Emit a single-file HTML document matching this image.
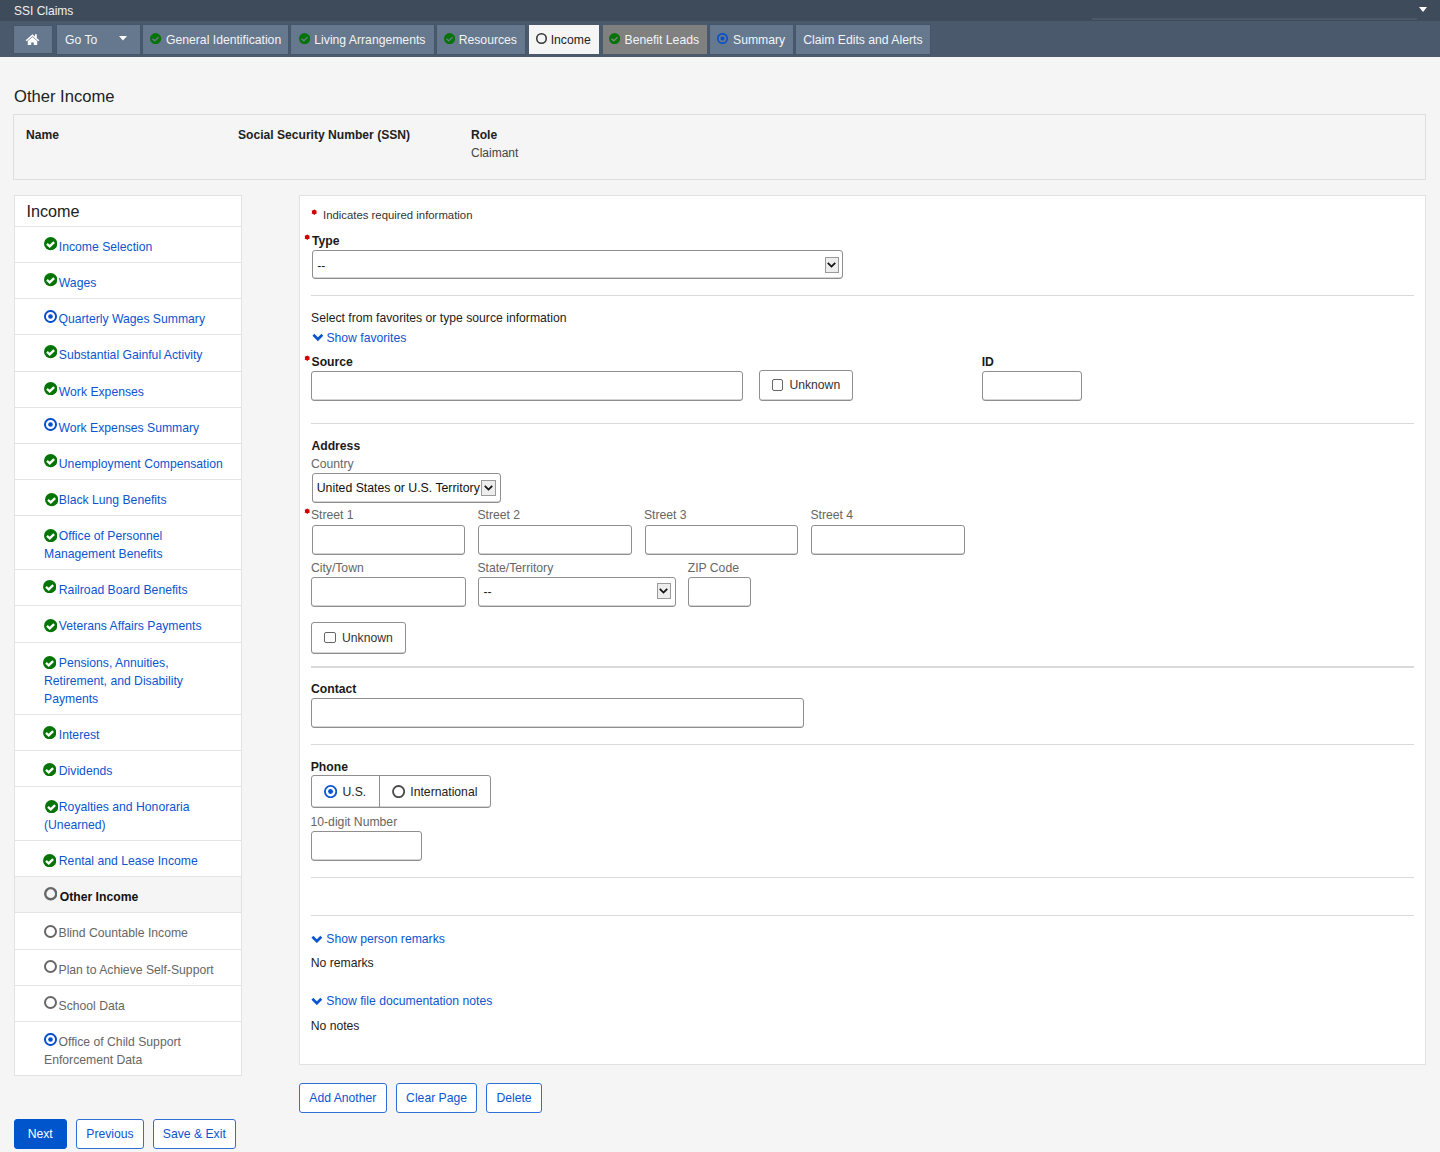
<!DOCTYPE html>
<html>
<head>
<meta charset="utf-8">
<style>
*{box-sizing:border-box;margin:0;padding:0}
html,body{width:1440px;height:1152px;overflow:hidden}
body{background:#f5f5f5;font-family:"Liberation Sans",sans-serif;font-size:12px;color:#222;position:relative}
.abs{position:absolute}
/* header */
#topbar{left:0;top:0;width:1440px;height:21px;background:#3d4b5a}
#topbar .t{left:14px;top:3.8px;color:#eef0f2;font-size:12px;line-height:15px;white-space:nowrap;transform:scaleY(1.08);transform-origin:0 11.66px}
#topbar .ln{left:1092px;top:18px;width:325px;height:2px;background:#4a5868}
#topbar .car{left:1419.4px;top:6.8px;width:0;height:0;border-left:4px solid transparent;border-right:4px solid transparent;border-top:5px solid #fff}
#nav{left:0;top:21px;width:1440px;height:36px;background:#4a5a6c}
.tab{position:absolute;top:4px;height:29px;background:#66788d;color:#f2f4f6;font-size:12.2px;line-height:29px;white-space:nowrap;box-shadow:0 0 0 1px #46566a}
.tab svg.tic{position:absolute;top:8.1px}
.tab svg{position:absolute}
.tab span{position:absolute;top:0.55px;transform:scaleY(1.08);transform-origin:0 18.7px}
/* title */
#title{left:14px;top:87.3px;font-size:16.6px;line-height:20px;color:#222;white-space:nowrap}
#info{left:13px;top:114px;width:1413px;height:65.5px;border:1px solid #dedede;background:#f5f5f5}
#info .h{position:absolute;top:13px;font-weight:bold;font-size:12.1px;line-height:15px;white-space:nowrap}
#info .v{position:absolute;top:31px;font-size:12px;line-height:15px;color:#444}
/* sidebar */
#side{left:13.5px;top:195px;width:228px;border:1px solid #e2e2e2;background:#fff}
#side .hd{height:31.0px;border-bottom:1px solid #e4e4e4;font-size:16.2px;line-height:20px;padding:5px 0 0 12px;color:#222}
.it{position:relative;padding:11px 10px 6.15px 29.5px;line-height:18px;font-size:12.2px;border-bottom:1px solid #e4e4e4}
.it:last-child{border-bottom:none}
.it .si{vertical-align:-1px;position:relative}
.lnk{color:#0b55cf}
.act{background:#f5f5f5;color:#111;font-weight:bold}
.dis{color:#666}
/* buttons */
.btn{position:absolute;height:30px;border:1px solid #2f6fd6;border-radius:3px;background:#fff;color:#0b55cf;font-size:12.2px;line-height:28px;text-align:center;white-space:nowrap}
.btn.pri{background:#0055cc;border-color:#0055cc;color:#fff}
/* main panel */
#main{left:299px;top:195px;width:1127px;height:869.5px;border:1px solid #e2e2e2;background:#fff}
.m{position:absolute;white-space:nowrap}
.lbl{font-weight:bold;font-size:12px;line-height:15px;color:#1a1a1a}
.glbl{font-size:12px;line-height:15px;color:#666}
.req{position:absolute;color:#d0021b;font-size:11px;font-weight:bold;line-height:11px}
.inp{position:absolute;height:30px;border:1px solid #8f8f8f;border-radius:3px;background:#fff;box-shadow:inset 0 -0.5px 0 #aaa}
.sel .dd{position:absolute;width:14.5px;height:16px;background:#ececec;border:1px solid #a0a0a0;top:6px}
.sel .dd svg{position:absolute;left:1.5px;top:3.5px}
.sel .tx{position:absolute;left:6px;top:0;line-height:28px;font-size:12px;color:#222}
.sep{position:absolute;left:11px;width:1103px;height:1.7px;background:#dadada}
.chev{position:absolute}
.lk{color:#0b55cf;font-size:12px;line-height:15px}
.unk{position:absolute;height:31px;border:1px solid #8f8f8f;border-radius:3px;background:#fff;font-size:12px;color:#333;line-height:29px;white-space:nowrap}
.cb{position:absolute;width:11.5px;height:11.5px;border:1.3px solid #666;border-radius:2px;top:9px}
</style>
</head>
<body>
<div id="topbar" class="abs">
  <div class="abs t">SSI Claims</div>
  <div class="abs ln"></div>
  <div class="abs car"></div>
</div>
<div id="nav" class="abs">
  <div class="tab" style="left:14px;top:5px;width:38.3px;height:27px">
    <svg style="left:11.3px;top:6.5px" width="15" height="12.5" viewBox="0 0 14 12" preserveAspectRatio="none"><path d="M7 1.2 L0.6 7 L1.6 8 L7 3.2 L12.4 8 L13.4 7 L11 4.8 L11 1.2 L9.3 1.2 L9.3 3.3 Z" fill="#fff"/><path d="M2.6 7.6 L7 3.8 L11.4 7.6 L11.4 12 L8.2 12 L8.2 9 L5.8 9 L5.8 12 L2.6 12 Z" fill="#fff"/></svg>
  </div>
  <div class="tab" style="left:57px;width:83px"><span style="left:8px">Go To</span>
    <svg style="left:62px;top:11px" width="8" height="5" viewBox="0 0 8 5"><path d="M0 0 L8 0 L4 4.6 Z" fill="#fff"/></svg>
  </div>
  <div class="tab" style="left:143px;width:145.3px"><svg style="left:7.4px" class="tic" width="11.2" height="11.2" viewBox="0 0 13 13"><circle cx="6.5" cy="6.5" r="6.5" fill="#047504"/><path d="M2.9 6.8 L5.6 9.1 L9.9 5.0" fill="none" stroke="#66788d" stroke-width="1.6"/></svg><span style="left:23px">General Identification</span></div>
  <div class="tab" style="left:291.3px;width:142.6px"><svg style="left:7.4px" class="tic" width="11.2" height="11.2" viewBox="0 0 13 13"><circle cx="6.5" cy="6.5" r="6.5" fill="#047504"/><path d="M2.9 6.8 L5.6 9.1 L9.9 5.0" fill="none" stroke="#66788d" stroke-width="1.6"/></svg><span style="left:23px">Living Arrangements</span></div>
  <div class="tab" style="left:436.7px;width:88.6px"><svg style="left:7.5px" class="tic" width="11.2" height="11.2" viewBox="0 0 13 13"><circle cx="6.5" cy="6.5" r="6.5" fill="#047504"/><path d="M2.9 6.8 L5.6 9.1 L9.9 5.0" fill="none" stroke="#66788d" stroke-width="1.6"/></svg><span style="left:22px">Resources</span></div>
  <div class="tab" style="left:528.7px;width:70px;background:#f5f5f5;color:#222;box-shadow:none"><svg style="left:7px" class="tic" width="11" height="11" viewBox="0 0 13 13"><circle cx="6.5" cy="6.5" r="5.60" fill="none" stroke="#333" stroke-width="1.8"/></svg><span style="left:22px">Income</span></div>
  <div class="tab" style="left:602.5px;width:104.2px;background:#808080;box-shadow:none"><svg style="left:6.7px" class="tic" width="11.2" height="11.2" viewBox="0 0 13 13"><circle cx="6.5" cy="6.5" r="6.5" fill="#047504"/><path d="M2.9 6.8 L5.6 9.1 L9.9 5.0" fill="none" stroke="#808080" stroke-width="1.6"/></svg><span style="left:22px">Benefit Leads</span></div>
  <div class="tab" style="left:710px;width:82.5px"><svg style="left:7px" class="tic" width="11" height="11" viewBox="0 0 13 13"><circle cx="6.5" cy="6.5" r="5.55" fill="none" stroke="#0650cc" stroke-width="1.95"/><circle cx="6.5" cy="6.5" r="2.3" fill="#0650cc"/></svg><span style="left:23px">Summary</span></div>
  <div class="tab" style="left:795.8px;width:134.2px"><span style="left:7.5px">Claim Edits and Alerts</span></div>
</div>

<div id="title" class="abs">Other Income</div>
<div id="info" class="abs">
  <div class="h" style="left:12px">Name</div>
  <div class="h" style="left:224px">Social Security Number (SSN)</div>
  <div class="h" style="left:457px">Role</div>
  <div class="v" style="left:457px">Claimant</div>
</div>

<div id="side" class="abs">
  <div class="hd">Income</div>
<div class="it lnk"><svg style="top:-1.5px;left:0.0px;margin-right:1.5px" class="si" width="13.3" height="13.3" viewBox="0 0 13 13"><circle cx="6.5" cy="6.5" r="6.5" fill="#047504"/><path d="M2.9 6.8 L5.6 9.1 L9.9 5.0" fill="none" stroke="#fff" stroke-width="2.3"/></svg>Income Selection</div>
<div class="it lnk"><svg style="top:-1.5px;left:0.0px;margin-right:1.5px" class="si" width="13.3" height="13.3" viewBox="0 0 13 13"><circle cx="6.5" cy="6.5" r="6.5" fill="#047504"/><path d="M2.9 6.8 L5.6 9.1 L9.9 5.0" fill="none" stroke="#fff" stroke-width="2.3"/></svg>Wages</div>
<div class="it lnk"><svg style="top:-1.3px;left:0.0px;margin-right:1.5px" class="si" width="13" height="13" viewBox="0 0 13 13"><circle cx="6.5" cy="6.5" r="5.55" fill="none" stroke="#0650cc" stroke-width="1.95"/><circle cx="6.5" cy="6.5" r="2.3" fill="#0650cc"/></svg>Quarterly Wages Summary</div>
<div class="it lnk"><svg style="top:-1.8px;left:0.0px;margin-right:1.5px" class="si" width="13.3" height="13.3" viewBox="0 0 13 13"><circle cx="6.5" cy="6.5" r="6.5" fill="#047504"/><path d="M2.9 6.8 L5.6 9.1 L9.9 5.0" fill="none" stroke="#fff" stroke-width="2.3"/></svg>Substantial Gainful Activity</div>
<div class="it lnk"><svg style="top:-1.3px;left:0.0px;margin-right:1.5px" class="si" width="13.3" height="13.3" viewBox="0 0 13 13"><circle cx="6.5" cy="6.5" r="6.5" fill="#047504"/><path d="M2.9 6.8 L5.6 9.1 L9.9 5.0" fill="none" stroke="#fff" stroke-width="2.3"/></svg>Work Expenses</div>
<div class="it lnk"><svg style="top:-1.8px;left:0.0px;margin-right:1.5px" class="si" width="13" height="13" viewBox="0 0 13 13"><circle cx="6.5" cy="6.5" r="5.55" fill="none" stroke="#0650cc" stroke-width="1.95"/><circle cx="6.5" cy="6.5" r="2.3" fill="#0650cc"/></svg>Work Expenses Summary</div>
<div class="it lnk"><svg style="top:-1.3px;left:0.0px;margin-right:1.5px" class="si" width="13.3" height="13.3" viewBox="0 0 13 13"><circle cx="6.5" cy="6.5" r="6.5" fill="#047504"/><path d="M2.9 6.8 L5.6 9.1 L9.9 5.0" fill="none" stroke="#fff" stroke-width="2.3"/></svg>Unemployment Compensation</div>
<div class="it lnk"><svg style="top:1.8px;left:1.0px;margin-right:1.5px" class="si" width="13.3" height="13.3" viewBox="0 0 13 13"><circle cx="6.5" cy="6.5" r="6.5" fill="#047504"/><path d="M2.9 6.8 L5.6 9.1 L9.9 5.0" fill="none" stroke="#fff" stroke-width="2.3"/></svg>Black Lung Benefits</div>
<div class="it lnk"><svg style="top:1.3px;left:-0.3px;margin-right:1.5px" class="si" width="13.3" height="13.3" viewBox="0 0 13 13"><circle cx="6.5" cy="6.5" r="6.5" fill="#047504"/><path d="M2.9 6.8 L5.6 9.1 L9.9 5.0" fill="none" stroke="#fff" stroke-width="2.3"/></svg>Office of Personnel Management Benefits</div>
<div class="it lnk"><svg style="top:-1.8px;left:-0.9px;margin-right:1.5px" class="si" width="13.3" height="13.3" viewBox="0 0 13 13"><circle cx="6.5" cy="6.5" r="6.5" fill="#047504"/><path d="M2.9 6.8 L5.6 9.1 L9.9 5.0" fill="none" stroke="#fff" stroke-width="2.3"/></svg>Railroad Board Benefits</div>
<div class="it lnk"><svg style="top:1.3px;left:0.0px;margin-right:1.5px" class="si" width="13.3" height="13.3" viewBox="0 0 13 13"><circle cx="6.5" cy="6.5" r="6.5" fill="#047504"/><path d="M2.9 6.8 L5.6 9.1 L9.9 5.0" fill="none" stroke="#fff" stroke-width="2.3"/></svg>Veterans Affairs Payments</div>
<div class="it lnk"><svg style="top:1.3px;left:-0.9px;margin-right:1.5px" class="si" width="13.3" height="13.3" viewBox="0 0 13 13"><circle cx="6.5" cy="6.5" r="6.5" fill="#047504"/><path d="M2.9 6.8 L5.6 9.1 L9.9 5.0" fill="none" stroke="#fff" stroke-width="2.3"/></svg>Pensions, Annuities, Retirement, and Disability Payments</div>
<div class="it lnk"><svg style="top:-0.8px;left:-0.9px;margin-right:1.5px" class="si" width="13.3" height="13.3" viewBox="0 0 13 13"><circle cx="6.5" cy="6.5" r="6.5" fill="#047504"/><path d="M2.9 6.8 L5.6 9.1 L9.9 5.0" fill="none" stroke="#fff" stroke-width="2.3"/></svg>Interest</div>
<div class="it lnk"><svg style="top:0.6px;left:-0.9px;margin-right:1.5px" class="si" width="13.3" height="13.3" viewBox="0 0 13 13"><circle cx="6.5" cy="6.5" r="6.5" fill="#047504"/><path d="M2.9 6.8 L5.6 9.1 L9.9 5.0" fill="none" stroke="#fff" stroke-width="2.3"/></svg>Dividends</div>
<div class="it lnk"><svg style="top:1.4px;left:1.0px;margin-right:1.5px" class="si" width="13.3" height="13.3" viewBox="0 0 13 13"><circle cx="6.5" cy="6.5" r="6.5" fill="#047504"/><path d="M2.9 6.8 L5.6 9.1 L9.9 5.0" fill="none" stroke="#fff" stroke-width="2.3"/></svg>Royalties and Honoraria (Unearned)</div>
<div class="it lnk"><svg style="top:1.0px;left:-0.9px;margin-right:1.5px" class="si" width="13.3" height="13.3" viewBox="0 0 13 13"><circle cx="6.5" cy="6.5" r="6.5" fill="#047504"/><path d="M2.9 6.8 L5.6 9.1 L9.9 5.0" fill="none" stroke="#fff" stroke-width="2.3"/></svg>Rental and Lease Income</div>
<div class="it act"><svg style="top:-1.5px;left:0.0px;margin-right:2.3px" class="si" width="13.4" height="13.4" viewBox="0 0 13 13"><circle cx="6.5" cy="6.5" r="5.35" fill="none" stroke="#666" stroke-width="2.3"/></svg>Other Income</div>
<div class="it dis"><svg style="top:-0.9px;left:0.0px;margin-right:1.5px" class="si" width="13" height="13" viewBox="0 0 13 13"><circle cx="6.5" cy="6.5" r="5.50" fill="none" stroke="#666" stroke-width="2.0"/></svg>Blind Countable Income</div>
<div class="it dis"><svg style="top:-1.8px;left:0.0px;margin-right:1.5px" class="si" width="13" height="13" viewBox="0 0 13 13"><circle cx="6.5" cy="6.5" r="5.50" fill="none" stroke="#666" stroke-width="2.0"/></svg>Plan to Achieve Self-Support</div>
<div class="it dis"><svg style="top:-1.5px;left:0.0px;margin-right:1.5px" class="si" width="13" height="13" viewBox="0 0 13 13"><circle cx="6.5" cy="6.5" r="5.50" fill="none" stroke="#666" stroke-width="2.0"/></svg>School Data</div>
<div class="it dis"><svg style="top:-1.3px;left:0.0px;margin-right:1.5px" class="si" width="13" height="13" viewBox="0 0 13 13"><circle cx="6.5" cy="6.5" r="5.55" fill="none" stroke="#0650cc" stroke-width="1.95"/><circle cx="6.5" cy="6.5" r="2.3" fill="#0650cc"/></svg>Office of Child Support Enforcement Data</div>
</div>

<div class="btn pri" style="left:13.5px;top:1119px;width:53.4px">Next</div>
<div class="btn" style="left:76px;top:1119px;width:68px">Previous</div>
<div class="btn" style="left:153px;top:1119px;width:82.6px">Save &amp; Exit</div>

<div id="main" class="abs">
<svg class="m" style="left:10.90px;top:12.60px" width="6.4" height="6.4" viewBox="-3.2 -3.2 6.4 6.4"><path d="M0.00 -3.05 L0.95 -1.65 L2.64 -1.52 L1.90 0.00 L2.64 1.52 L0.95 1.65 L0.00 3.05 L-0.95 1.65 L-2.64 1.53 L-1.90 0.00 L-2.64 -1.53 L-0.95 -1.65 Z" fill="#d00000"/><circle r="2.15" fill="#d00000"/></svg>
<div class="m" style="left:23.00px;top:12.47px;font-size:11.35px;line-height:15px;color:#333;">Indicates required information</div>
<svg class="m" style="left:3.60px;top:37.70px" width="6.4" height="6.4" viewBox="-3.2 -3.2 6.4 6.4"><path d="M0.00 -3.05 L0.95 -1.65 L2.64 -1.52 L1.90 0.00 L2.64 1.52 L0.95 1.65 L0.00 3.05 L-0.95 1.65 L-2.64 1.53 L-1.90 0.00 L-2.64 -1.53 L-0.95 -1.65 Z" fill="#d00000"/><circle r="2.15" fill="#d00000"/></svg>
<div class="m" style="left:11.90px;top:37.87px;font-size:12.2px;line-height:15px;color:#1a1a1a;font-weight:bold;">Type</div>
<div class="inp" style="left:11.50px;top:53.80px;width:531.70px;height:29.60px;"></div>
<div class="m" style="left:17.30px;top:62.87px;font-size:12.2px;line-height:15px;color:#222;">--</div>
<div class="m" style="left:524.70px;top:60.50px;width:14.20px;height:16.00px;background:#ededed;border:1px solid #9a9a9a"><svg style="position:absolute;left:1.60px;top:4.00px" width="9" height="6" viewBox="0 0 9 6"><path d="M0.8 0.8 L4.5 4.6 L8.2 0.8" fill="none" stroke="#111" stroke-width="1.7"/></svg></div>
<div class="sep" style="top:98.75px"></div>
<div class="m" style="left:11.10px;top:115.27px;font-size:12.2px;line-height:15px;color:#222;">Select from favorites or type source information</div>
<svg class="m" style="left:11.50px;top:137.40px" width="11.80" height="8.30" viewBox="0 0 11 7"><path d="M1.3 1.3 L5.5 5.5 L9.7 1.3" fill="none" stroke="#0b55cf" stroke-width="2.5"/></svg>
<div class="m" style="left:26.40px;top:134.57px;font-size:12.2px;line-height:15px;color:#0b55cf;">Show favorites</div>
<svg class="m" style="left:3.55px;top:158.60px" width="6.4" height="6.4" viewBox="-3.2 -3.2 6.4 6.4"><path d="M0.00 -3.05 L0.95 -1.65 L2.64 -1.52 L1.90 0.00 L2.64 1.52 L0.95 1.65 L0.00 3.05 L-0.95 1.65 L-2.64 1.53 L-1.90 0.00 L-2.64 -1.53 L-0.95 -1.65 Z" fill="#d00000"/><circle r="2.15" fill="#d00000"/></svg>
<div class="m" style="left:11.50px;top:158.87px;font-size:12.2px;line-height:15px;color:#1a1a1a;font-weight:bold;">Source</div>
<div class="inp" style="left:11.40px;top:175.40px;width:431.20px;height:29.70px;"></div>
<div class="inp" style="left:458.50px;top:173.70px;width:94.90px;height:31.50px;"></div>
<div class="m" style="left:471.60px;top:183.20px;width:11.70px;height:11.60px;border:1.2px solid #666;border-radius:2px;background:#fff"></div>
<div class="m" style="left:489.40px;top:182.47px;font-size:12.2px;line-height:15px;color:#333;">Unknown</div>
<div class="m" style="left:681.70px;top:159.07px;font-size:12.2px;line-height:15px;color:#1a1a1a;font-weight:bold;">ID</div>
<div class="inp" style="left:682.40px;top:175.40px;width:100.00px;height:30.00px;"></div>
<div class="sep" style="top:226.65px"></div>
<div class="m" style="left:11.40px;top:242.67px;font-size:12.2px;line-height:15px;color:#1a1a1a;font-weight:bold;">Address</div>
<div class="m" style="left:10.90px;top:260.67px;font-size:12.2px;line-height:15px;color:#666;">Country</div>
<div class="inp" style="left:11.50px;top:277.00px;width:189.00px;height:30.20px;"></div>
<div class="m" style="left:16.70px;top:285.14px;font-size:12.3px;line-height:15px;color:#111;">United States or U.S. Territory</div>
<div class="m" style="left:181.40px;top:284.10px;width:14.50px;height:16.40px;background:#ededed;border:1px solid #9a9a9a"><svg style="position:absolute;left:1.75px;top:4.20px" width="9" height="6" viewBox="0 0 9 6"><path d="M0.8 0.8 L4.5 4.6 L8.2 0.8" fill="none" stroke="#111" stroke-width="1.7"/></svg></div>
<svg class="m" style="left:3.55px;top:312.05px" width="6.4" height="6.4" viewBox="-3.2 -3.2 6.4 6.4"><path d="M0.00 -3.05 L0.95 -1.65 L2.64 -1.52 L1.90 0.00 L2.64 1.52 L0.95 1.65 L0.00 3.05 L-0.95 1.65 L-2.64 1.53 L-1.90 0.00 L-2.64 -1.53 L-0.95 -1.65 Z" fill="#d00000"/><circle r="2.15" fill="#d00000"/></svg>
<div class="m" style="left:10.90px;top:312.37px;font-size:12.2px;line-height:15px;color:#666;">Street 1</div>
<div class="inp" style="left:11.50px;top:329.00px;width:153.90px;height:29.50px;"></div>
<div class="m" style="left:177.40px;top:312.37px;font-size:12.2px;line-height:15px;color:#666;">Street 2</div>
<div class="inp" style="left:178.00px;top:329.00px;width:153.80px;height:29.50px;"></div>
<div class="m" style="left:343.90px;top:312.37px;font-size:12.2px;line-height:15px;color:#666;">Street 3</div>
<div class="inp" style="left:344.50px;top:329.00px;width:153.80px;height:29.50px;"></div>
<div class="m" style="left:510.40px;top:312.37px;font-size:12.2px;line-height:15px;color:#666;">Street 4</div>
<div class="inp" style="left:511.00px;top:329.00px;width:153.70px;height:29.50px;"></div>
<div class="m" style="left:10.90px;top:364.52px;font-size:12.2px;line-height:15px;color:#666;">City/Town</div>
<div class="inp" style="left:11.25px;top:380.50px;width:154.35px;height:30.00px;"></div>
<div class="m" style="left:177.40px;top:364.52px;font-size:12.2px;line-height:15px;color:#666;">State/Territory</div>
<div class="inp" style="left:178.00px;top:380.50px;width:197.50px;height:30.00px;"></div>
<div class="m" style="left:183.50px;top:389.37px;font-size:12.2px;line-height:15px;color:#222;">--</div>
<div class="m" style="left:356.80px;top:387.20px;width:14.20px;height:16.10px;background:#ededed;border:1px solid #9a9a9a"><svg style="position:absolute;left:1.60px;top:4.05px" width="9" height="6" viewBox="0 0 9 6"><path d="M0.8 0.8 L4.5 4.6 L8.2 0.8" fill="none" stroke="#111" stroke-width="1.7"/></svg></div>
<div class="m" style="left:387.70px;top:364.52px;font-size:12.2px;line-height:15px;color:#666;">ZIP Code</div>
<div class="inp" style="left:387.80px;top:380.50px;width:62.80px;height:30.00px;"></div>
<div class="inp" style="left:11.25px;top:426.25px;width:94.75px;height:31.25px;"></div>
<div class="m" style="left:24.10px;top:435.90px;width:12.15px;height:11.60px;border:1.2px solid #666;border-radius:2px;background:#fff"></div>
<div class="m" style="left:42.00px;top:434.77px;font-size:12.2px;line-height:15px;color:#333;">Unknown</div>
<div class="sep" style="top:470.05px"></div>
<div class="m" style="left:11.00px;top:486.07px;font-size:12.2px;line-height:15px;color:#1a1a1a;font-weight:bold;">Contact</div>
<div class="inp" style="left:11.30px;top:502.30px;width:492.30px;height:29.90px;"></div>
<div class="sep" style="top:547.55px"></div>
<div class="m" style="left:10.70px;top:563.57px;font-size:12.2px;line-height:15px;color:#1a1a1a;font-weight:bold;">Phone</div>
<div class="inp" style="left:11.30px;top:579.40px;width:179.70px;height:32.40px;"></div>
<div class="m" style="left:79.00px;top:579.40px;width:1px;height:32.40px;background:#8f8f8f"></div>
<svg class="m" style="left:24.20px;top:589.20px" width="13.2" height="13.2" viewBox="0 0 13.2 13.2"><circle cx="6.6" cy="6.6" r="5.7" fill="none" stroke="#0b55cf" stroke-width="1.8"/><circle cx="6.6" cy="6.6" r="2.5" fill="#0b55cf"/></svg>
<div class="m" style="left:42.50px;top:588.97px;font-size:12.2px;line-height:15px;color:#222;">U.S.</div>
<svg class="m" style="left:92.00px;top:589.20px" width="13.2" height="13.2" viewBox="0 0 13.2 13.2"><circle cx="6.6" cy="6.6" r="5.6" fill="none" stroke="#4a4a4a" stroke-width="1.8"/></svg>
<div class="m" style="left:110.30px;top:588.97px;font-size:12.2px;line-height:15px;color:#222;">International</div>
<div class="m" style="left:10.50px;top:619.17px;font-size:12.2px;line-height:15px;color:#666;">10-digit Number</div>
<div class="inp" style="left:11.30px;top:635.30px;width:110.50px;height:30.10px;"></div>
<div class="sep" style="top:680.55px"></div>
<div class="sep" style="top:718.65px"></div>
<svg class="m" style="left:11.40px;top:738.50px" width="11.70" height="8.30" viewBox="0 0 11 7"><path d="M1.3 1.3 L5.5 5.5 L9.7 1.3" fill="none" stroke="#0b55cf" stroke-width="2.5"/></svg>
<div class="m" style="left:26.30px;top:736.17px;font-size:12.2px;line-height:15px;color:#0b55cf;">Show person remarks</div>
<div class="m" style="left:10.70px;top:760.47px;font-size:12.2px;line-height:15px;color:#222;">No remarks</div>
<svg class="m" style="left:11.40px;top:800.70px" width="11.70" height="8.30" viewBox="0 0 11 7"><path d="M1.3 1.3 L5.5 5.5 L9.7 1.3" fill="none" stroke="#0b55cf" stroke-width="2.5"/></svg>
<div class="m" style="left:26.30px;top:798.27px;font-size:12.2px;line-height:15px;color:#0b55cf;">Show file documentation notes</div>
<div class="m" style="left:10.70px;top:822.67px;font-size:12.2px;line-height:15px;color:#222;">No notes</div>
</div>

<div class="btn" style="left:299px;top:1083px;width:87.6px">Add Another</div>
<div class="btn" style="left:396.3px;top:1083px;width:80.6px">Clear Page</div>
<div class="btn" style="left:486.2px;top:1083px;width:55.7px">Delete</div>
</body>
</html>
